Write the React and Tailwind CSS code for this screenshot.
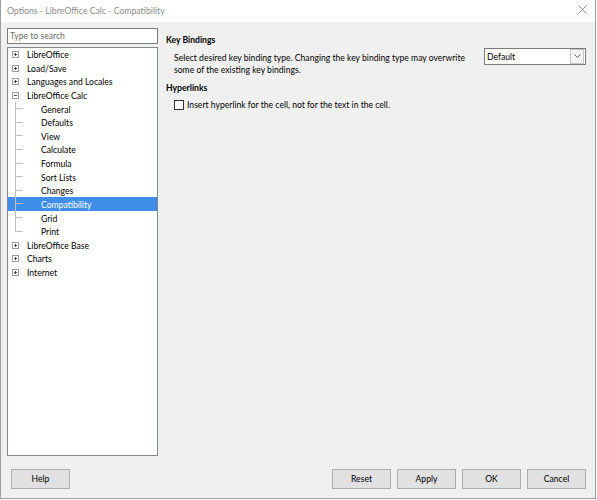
import React from "react";

function Expander({ open }) {
  return (
    <span className="relative w-[7px] h-[7px] border border-[#9c9c9c] bg-white shrink-0">
      <span className="absolute left-[1px] top-[2px] w-[3px] h-[1px] bg-[#4a4a4a]" />
      {!open && <span className="absolute left-[2px] top-[1px] w-[1px] h-[3px] bg-[#4a4a4a]" />}
    </span>
  );
}

function TopItem({ label, open }) {
  return (
    <div className="h-[13.625px] flex items-center pl-[4px]">
      <Expander open={open} />
      <span className="ml-[8px] pt-[2px] text-black">{label}</span>
    </div>
  );
}

function Child({ label, selected, last }) {
  return (
    <div className={"h-[13.625px] flex items-center relative " + (selected ? "bg-[#3f8ee9] text-white" : "text-black")}>
      <span className={"absolute left-[7px] top-0 w-[1px] bg-[#bdbdbd] " + (last ? "h-[7px]" : "h-full")} />
      <span className="absolute left-[8px] top-[6px] w-[7px] h-[1px] bg-[#bdbdbd]" />
      <span className="ml-[33px] pt-[2px]">{label}</span>
    </div>
  );
}

function Btn({ children, className = "" }) {
  return (
    <div className={"h-[20px] w-[59px] border border-[#adadad] bg-[#e1e1e1] flex items-center justify-center text-black pt-[1px] " + className}>
      {children}
    </div>
  );
}

export default function App() {
  const children = ["General", "Defaults", "View", "Calculate", "Formula", "Sort Lists", "Changes", "Compatibility", "Grid", "Print"];
  return (
    <div className="w-[597px] h-[500px] bg-white text-[8.6px] leading-none overflow-hidden font-['Lato',sans-serif]">
      <div className="w-[596px] h-[499px] border-x border-b border-[#9e9e9e] flex flex-col bg-[#f0f0f0]">
        <div className="h-[22px] bg-white flex items-center justify-between pl-[6px] pr-[6px]">
          <span className="text-[#8c8c8c] text-[8.7px] mt-[2px]">Options - LibreOffice Calc - Compatibility</span>
          <svg width="9" height="9" viewBox="0 0 9 9" className="mr-[2px] mb-[2px]">
            <path d="M0.5 0.5 L8.5 8.5 M8.5 0.5 L0.5 8.5" stroke="#8c8c8c" strokeWidth="1" />
          </svg>
        </div>
        <div className="flex flex-1 pt-[6px]">
          <div className="w-[151px] ml-[6px] flex flex-col">
            <div className="h-[16px] border border-[#7a7a7a] bg-white flex items-center pl-[2px] pt-[2px] text-[#6d6d6d]">Type to search</div>
            <div className="mt-[3px] h-[409px] border border-[#828790] bg-white">
              <TopItem label="LibreOffice" />
              <TopItem label="Load/Save" />
              <TopItem label="Languages and Locales" />
              <TopItem label="LibreOffice Calc" open />
              {children.map((c, i) => (
                <Child key={c} label={c} selected={c === "Compatibility"} last={i === children.length - 1} />
              ))}
              <TopItem label="LibreOffice Base" />
              <TopItem label="Charts" />
              <TopItem label="Internet" />
            </div>
          </div>
          <div className="flex-1 pl-[8px] pr-[9px] pt-[6px]">
            <div className="h-[14px] flex items-center font-bold text-black">Key Bindings</div>
            <div className="flex justify-between pl-[8px]">
              <div className="text-black leading-[12px] w-[300px] pt-[4px]">
                Select desired key binding type. Changing the key binding type may overwrite some of the existing key bindings.
              </div>
              <div className="w-[102px] h-[17px] border border-[#7a7a7a] bg-white flex items-center justify-between mt-[0px]">
                <span className="pl-[2px] pt-[2px]">Default</span>
                <span className="w-[14px] h-[15px] mr-[1px] border border-[#c6c6c6] bg-[#f4f4f4] flex items-center justify-center">
                  <svg width="7" height="4" viewBox="0 0 7 4"><path d="M0.5 0.5 L3.5 3.5 L6.5 0.5" stroke="#606060" fill="none" /></svg>
                </span>
              </div>
            </div>
            <div className="h-[14px] flex items-center font-bold text-black mt-[6px]">Hyperlinks</div>
            <div className="flex items-center mt-[3px] pl-[8px] h-[12px]">
              <span className="w-[10px] h-[10px] border border-[#333] bg-white" />
              <span className="ml-[3px] pt-[2px] text-black">Insert hyperlink for the cell, not for the text in the cell.</span>
            </div>
          </div>
        </div>
        <div className="h-[43px] flex items-start pt-[13px] pl-[10px] pr-[9px]">
          <Btn>Help</Btn>
          <div className="flex-1" />
          <Btn>Reset</Btn>
          <Btn className="ml-[6px]">Apply</Btn>
          <Btn className="ml-[6px]">OK</Btn>
          <Btn className="ml-[6px]">Cancel</Btn>
        </div>
      </div>
    </div>
  );
}
